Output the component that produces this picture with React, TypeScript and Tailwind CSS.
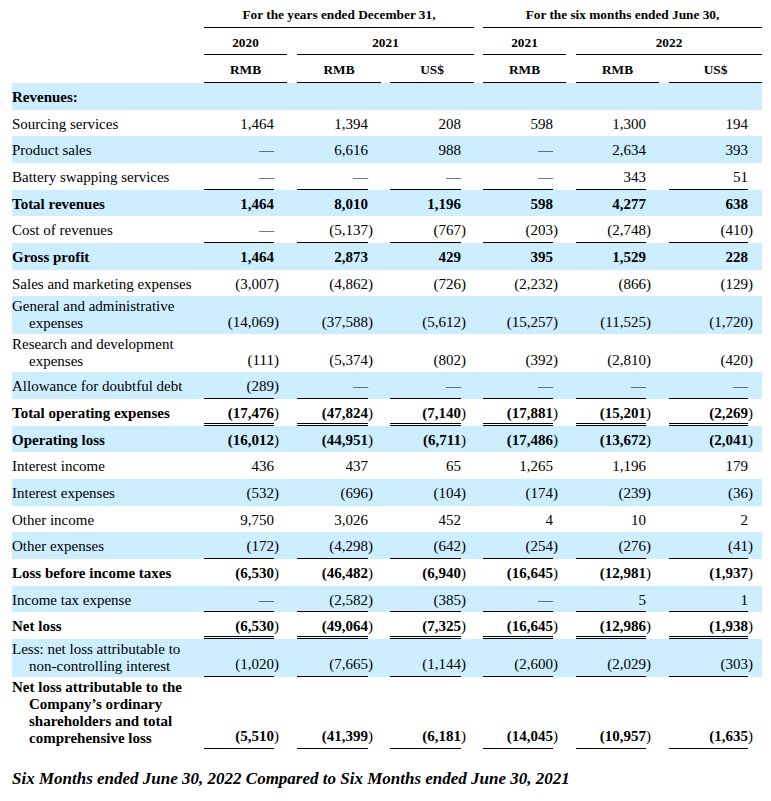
import React from 'react';

type Row = {
  label: string[];
  vals?: string[];
  bold?: boolean;
  blue?: boolean;
  line?: 'single' | 'double';
};

const rows: Row[] = [
  { label: ['Revenues:'], bold: true, blue: true },
  { label: ['Sourcing services'], vals: ['1,464', '1,394', '208', '598', '1,300', '194'] },
  { label: ['Product sales'], blue: true, vals: ['—', '6,616', '988', '—', '2,634', '393'] },
  { label: ['Battery swapping services'], vals: ['—', '—', '—', '—', '343', '51'], line: 'single' },
  { label: ['Total revenues'], bold: true, blue: true, vals: ['1,464', '8,010', '1,196', '598', '4,277', '638'] },
  { label: ['Cost of revenues'], vals: ['—', '(5,137)', '(767)', '(203)', '(2,748)', '(410)'], line: 'single' },
  { label: ['Gross profit'], bold: true, blue: true, vals: ['1,464', '2,873', '429', '395', '1,529', '228'] },
  { label: ['Sales and marketing expenses'], vals: ['(3,007)', '(4,862)', '(726)', '(2,232)', '(866)', '(129)'] },
  { label: ['General and administrative', 'expenses'], blue: true, vals: ['(14,069)', '(37,588)', '(5,612)', '(15,257)', '(11,525)', '(1,720)'] },
  { label: ['Research and development', 'expenses'], vals: ['(111)', '(5,374)', '(802)', '(392)', '(2,810)', '(420)'] },
  { label: ['Allowance for doubtful debt'], blue: true, vals: ['(289)', '—', '—', '—', '—', '—'], line: 'single' },
  { label: ['Total operating expenses'], bold: true, vals: ['(17,476)', '(47,824)', '(7,140)', '(17,881)', '(15,201)', '(2,269)'], line: 'double' },
  { label: ['Operating loss'], bold: true, blue: true, vals: ['(16,012)', '(44,951)', '(6,711)', '(17,486)', '(13,672)', '(2,041)'] },
  { label: ['Interest income'], vals: ['436', '437', '65', '1,265', '1,196', '179'] },
  { label: ['Interest expenses'], blue: true, vals: ['(532)', '(696)', '(104)', '(174)', '(239)', '(36)'] },
  { label: ['Other income'], vals: ['9,750', '3,026', '452', '4', '10', '2'] },
  { label: ['Other expenses'], blue: true, vals: ['(172)', '(4,298)', '(642)', '(254)', '(276)', '(41)'], line: 'single' },
  { label: ['Loss before income taxes'], bold: true, vals: ['(6,530)', '(46,482)', '(6,940)', '(16,645)', '(12,981)', '(1,937)'] },
  { label: ['Income tax expense'], blue: true, vals: ['—', '(2,582)', '(385)', '—', '5', '1'], line: 'single' },
  { label: ['Net loss'], bold: true, vals: ['(6,530)', '(49,064)', '(7,325)', '(16,645)', '(12,986)', '(1,938)'], line: 'double' },
  { label: ['Less: net loss attributable to', 'non-controlling interest'], blue: true, vals: ['(1,020)', '(7,665)', '(1,144)', '(2,600)', '(2,029)', '(303)'], line: 'single' },
  {
    label: ['Net loss attributable to the', 'Company’s ordinary', 'shareholders and total', 'comprehensive loss'],
    bold: true,
    vals: ['(5,510)', '(41,399)', '(6,181)', '(14,045)', '(10,957)', '(1,635)'],
    line: 'single',
  },
];

const Spacer = () => <td />;

const Head = ({ span, children }: { span: number; children: React.ReactNode }) => (
  <td colSpan={span} className="border-b border-black pt-[6px] pb-[3.7px] text-center text-[13.3px] font-bold leading-[17px]">
    {children}
  </td>
);

function ValueCells({ row }: { row: Row }) {
  const cells: React.ReactNode[] = [];
  (row.vals ?? ['', '', '', '', '', '']).forEach((v, i) => {
    const neg = v.startsWith('(');
    const lineCls =
      row.line === 'double'
        ? 'border-b-[3px] border-double border-black pb-[0.67px]'
        : row.line === 'single'
          ? 'border-b border-black pb-[2.67px]'
          : 'pb-[3.67px]';
    cells.push(
      <td key={`n${i}`} className={`pt-[6px] text-right align-bottom ${row.bold ? 'font-bold' : ''} ${lineCls}`}>
        {neg ? v.slice(0, -1) : v}
      </td>,
      <td key={`p${i}`} className="pt-[6px] pb-[3.67px] text-left align-bottom">
        {neg ? ')' : ''}
      </td>,
    );
    if (i < 5) cells.push(<td key={`s${i}`} />);
  });
  return <>{cells}</>;
}

export default function App() {
  return (
    <div className="min-h-screen bg-white pl-3 text-black" style={{ fontFamily: '"Liberation Serif", "Times New Roman", serif' }}>
      <table className="table-fixed border-separate border-spacing-0 text-[15px] leading-[17px]">
        <colgroup>
          <col className="w-[192px]" />
          <col className="w-[70px]" />
          <col className="w-[13px]" />
          <col className="w-[10px]" />
          <col className="w-[71px]" />
          <col className="w-[13px]" />
          <col className="w-[9px]" />
          <col className="w-[71px]" />
          <col className="w-[13px]" />
          <col className="w-[9px]" />
          <col className="w-[70px]" />
          <col className="w-[13px]" />
          <col className="w-[10px]" />
          <col className="w-[70px]" />
          <col className="w-[13px]" />
          <col className="w-[10px]" />
          <col className="w-[79px]" />
          <col className="w-[14px]" />
        </colgroup>
        <tbody>
          <tr>
            <td />
            <Head span={8}>For the years ended December 31,</Head>
            <Spacer />
            <Head span={8}>For the six months ended June 30,</Head>
          </tr>
          <tr>
            <td />
            <Head span={2}>2020</Head>
            <Spacer />
            <Head span={5}>2021</Head>
            <Spacer />
            <Head span={2}>2021</Head>
            <Spacer />
            <Head span={5}>2022</Head>
          </tr>
          <tr>
            <td />
            <Head span={2}>RMB</Head>
            <Spacer />
            <Head span={2}>RMB</Head>
            <Spacer />
            <Head span={2}>US$</Head>
            <Spacer />
            <Head span={2}>RMB</Head>
            <Spacer />
            <Head span={2}>RMB</Head>
            <Spacer />
            <Head span={2}>US$</Head>
          </tr>
          {rows.map((row, idx) => (
            <tr key={idx} className={row.blue ? 'bg-[#cceeff]' : ''}>
              <td className={`align-bottom ${row.label.length > 1 ? 'py-[2px]' : 'pt-[6px] pb-[3.67px]'} ${row.bold ? 'font-bold' : ''}`}>
                {row.label.map((l, j) => (
                  <div key={j} className={j > 0 ? 'pl-[17px]' : ''}>
                    {l}
                  </div>
                ))}
              </td>
              <ValueCells row={row} />
            </tr>
          ))}
        </tbody>
      </table>
      <p className="mt-[20px] text-[17px] font-bold italic leading-[20px]">
        Six Months ended June 30, 2022 Compared to Six Months ended June 30, 2021
      </p>
    </div>
  );
}
